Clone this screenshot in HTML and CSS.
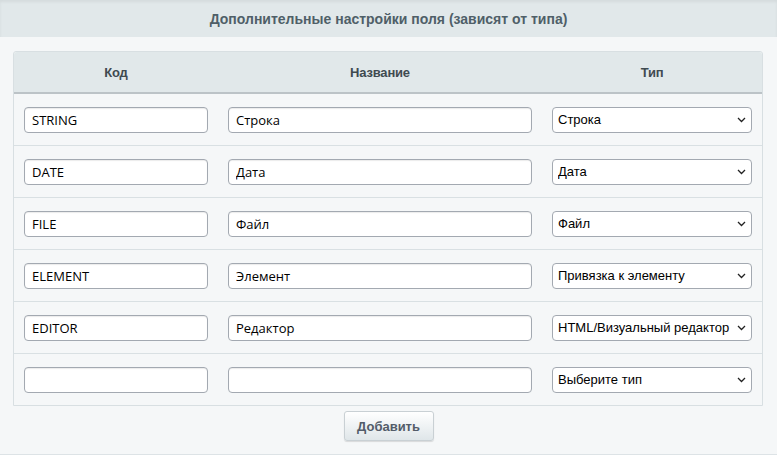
FILE: index.html
```html
<!DOCTYPE html>
<html lang="ru">
<head>
<meta charset="utf-8">
<link rel="stylesheet" href="styles.css">
</head>
<body>
<div class="page">
  <div class="title">Дополнительные настройки поля (зависят от типа)</div>
  <div class="content">
    <div class="table">
      <div class="row head">
        <div class="th">Код</div>
        <div class="th">Название</div>
        <div class="th">Тип</div>
      </div>
      <div class="row">
        <input class="inp" type="text" value="STRING">
        <input class="inp" type="text" value="Строка">
        <div class="selwrap"><select class="sel"><option>Строка</option></select><svg class="chev" width="9" height="6" viewBox="0 0 9 6"><path d="M1 1l3.5 3.5L8 1" fill="none" stroke="#222" stroke-width="1.3"/></svg></div>
      </div>
      <div class="row">
        <input class="inp" type="text" value="DATE">
        <input class="inp" type="text" value="Дата">
        <div class="selwrap"><select class="sel"><option>Дата</option></select><svg class="chev" width="9" height="6" viewBox="0 0 9 6"><path d="M1 1l3.5 3.5L8 1" fill="none" stroke="#222" stroke-width="1.3"/></svg></div>
      </div>
      <div class="row">
        <input class="inp" type="text" value="FILE">
        <input class="inp" type="text" value="Файл">
        <div class="selwrap"><select class="sel"><option>Файл</option></select><svg class="chev" width="9" height="6" viewBox="0 0 9 6"><path d="M1 1l3.5 3.5L8 1" fill="none" stroke="#222" stroke-width="1.3"/></svg></div>
      </div>
      <div class="row">
        <input class="inp" type="text" value="ELEMENT">
        <input class="inp" type="text" value="Элемент">
        <div class="selwrap"><select class="sel"><option>Привязка к элементу</option></select><svg class="chev" width="9" height="6" viewBox="0 0 9 6"><path d="M1 1l3.5 3.5L8 1" fill="none" stroke="#222" stroke-width="1.3"/></svg></div>
      </div>
      <div class="row">
        <input class="inp" type="text" value="EDITOR">
        <input class="inp" type="text" value="Редактор">
        <div class="selwrap"><select class="sel"><option>HTML/Визуальный редактор</option></select><svg class="chev" width="9" height="6" viewBox="0 0 9 6"><path d="M1 1l3.5 3.5L8 1" fill="none" stroke="#222" stroke-width="1.3"/></svg></div>
      </div>
      <div class="row last">
        <input class="inp" type="text" value="">
        <input class="inp" type="text" value="">
        <div class="selwrap"><select class="sel"><option>Выберите тип</option></select><svg class="chev" width="9" height="6" viewBox="0 0 9 6"><path d="M1 1l3.5 3.5L8 1" fill="none" stroke="#222" stroke-width="1.3"/></svg></div>
      </div>
    </div>
    <div class="actions">
      <button class="btn" type="button">Добавить</button>
    </div>
  </div>
</div>
</body>
</html>
```

FILE: styles.css
```css
html, body {
  margin: 0;
  padding: 0;
  background: #ffffff;
}
.page {
  width: 777px;
  height: 454px;
  background: #f5f7f8;
  border-bottom: 1px solid #dde3e6;
  font-family: "Liberation Sans", Arial, sans-serif;
}
.title {
  height: 37px;
  background: #e1e8ea;
  box-shadow: inset 0 2px 3px rgba(0, 0, 0, 0.06);
  display: flex;
  align-items: center;
  justify-content: center;
  font-weight: bold;
  font-size: 14px;
  color: #4f5f68;
}
.content {
  padding: 14px 13px 0 13px;
}
.table {
  width: 748px;
  border: 1px solid #d8dfe2;
  border-radius: 3px 3px 0 0;
  background: #f5f7f8;
}
.row {
  display: grid;
  grid-template-columns: 184px 304px 200px;
  column-gap: 20px;
  padding: 0 10px;
  height: 51px;
  align-items: center;
  border-bottom: 1px solid #d9e0e3;
}
.row.last {
  border-bottom: none;
}
.row.head {
  height: 40px;
  background: #e1e8ea;
  border-bottom: 2px solid #bcc3c7;
  border-radius: 3px 3px 0 0;
}
.th {
  text-align: center;
  font-weight: bold;
  font-size: 13px;
  color: #3f4a50;
  letter-spacing: -0.2px;
}
.inp {
  box-sizing: border-box;
  height: 26px;
  width: 100%;
  margin: 0;
  padding: 0 7px;
  border: 1px solid #a3a9b1;
  border-radius: 4px;
  background: #ffffff;
  box-shadow: inset 0 1px 1px rgba(0, 0, 0, 0.08);
  font-family: "Open Sans", sans-serif;
  font-size: 13px;
  color: #000000;
  outline: none;
}
.selwrap {
  position: relative;
  height: 26px;
}
.sel {
  box-sizing: border-box;
  appearance: none;
  -webkit-appearance: none;
  display: block;
  height: 26px;
  width: 100%;
  margin: 0;
  padding: 0 20px 0 5px;
  border: 1px solid #a3a9b1;
  border-radius: 4px;
  background-color: #ffffff;
  font-family: "Liberation Sans", Arial, sans-serif;
  font-size: 13px;
  color: #000000;
  outline: none;
}
.chev {
  position: absolute;
  right: 6px;
  top: 10px;
  pointer-events: none;
}
.actions {
  display: flex;
  justify-content: center;
  padding-top: 5px;
}
.btn {
  box-sizing: border-box;
  width: 90px;
  height: 30px;
  margin: 0;
  border: 1px solid #c9d0d4;
  border-radius: 3px;
  background: linear-gradient(#ffffff, #dfe6e9);
  box-shadow: 0 1px 1px rgba(0, 0, 0, 0.12);
  font-family: "Liberation Sans", Arial, sans-serif;
  font-weight: bold;
  font-size: 13px;
  color: #535c69;
  cursor: pointer;
}
```
